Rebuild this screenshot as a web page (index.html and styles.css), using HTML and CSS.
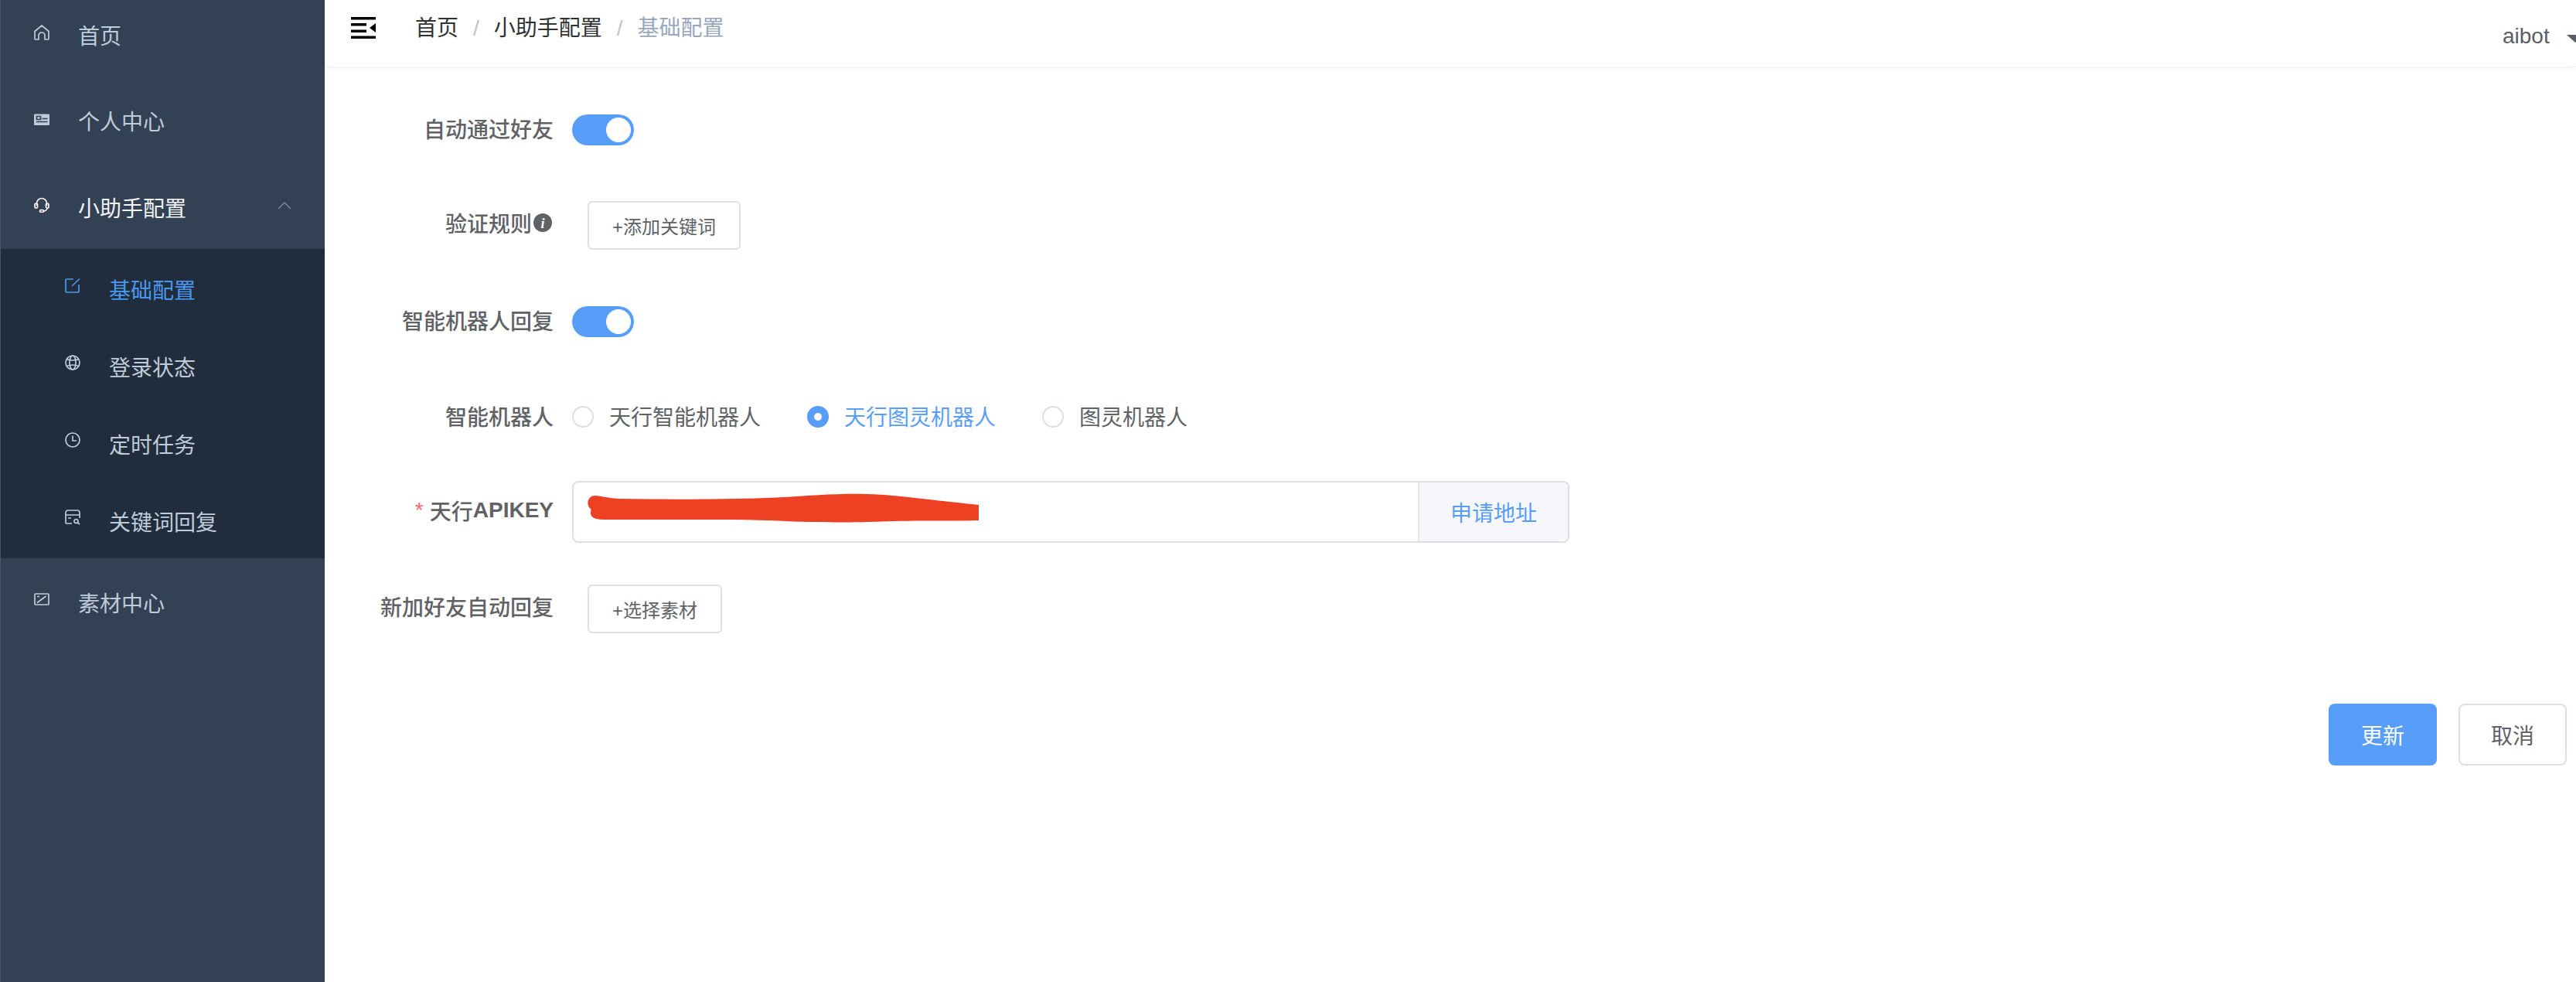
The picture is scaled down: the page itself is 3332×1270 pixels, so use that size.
FILE: index.html
```html
<!DOCTYPE html>
<html lang="zh-CN">
<head>
<meta charset="utf-8">
<title>基础配置</title>
<link rel="stylesheet" href="styles.css">
</head>
<body>
<div class="app">
  <aside class="sidebar">
    <nav class="menu">
      <a class="item">
        <svg class="icon" viewBox="0 0 20 20"><path d="M1 8.500 10 1l9 7.500V18a1 1 0 0 1-1 1h-4v-5a4 4 0 0 0-8 0v5H2a1 1 0 0 1-1-1z"/></svg>
        <span>首页</span>
      </a>
      <a class="item">
        <svg class="icon" viewBox="0 0 20 20"><path class="solid" d="M1 3.500h18a1 1 0 0 1 1 1V17a1 1 0 0 1-1 1H1a1 1 0 0 1-1-1V4.500a1 1 0 0 1 1-1z"/><path class="cut" d="M3.500 6.500h5v4h-5zM10.500 9.500h7M3 13.500h14.500"/></svg>
        <span>个人中心</span>
      </a>
      <a class="item item-open">
        <svg class="icon" viewBox="0 0 20 20"><path d="M3.500 11V8a6.500 6.500 0 0 1 13 0v3"/><rect x="1" y="8" width="3.500" height="6" rx="1.700"/><rect x="15.500" y="8" width="3.500" height="6" rx="1.700"/><path d="M17 14c0 3-3 4-5 4"/><rect x="7.500" y="16.500" width="5" height="2.800" rx="1.400"/></svg>
        <span>小助手配置</span>
        <svg class="chevron" viewBox="0 0 18 10"><path d="M1 9 9 1l8 8"/></svg>
      </a>
      <div class="submenu">
        <a class="subitem subitem-active">
          <svg class="icon" viewBox="0 0 20 20"><path d="M11 2H2a1 1 0 0 0-1 1v15a1 1 0 0 0 1 1h15a1 1 0 0 0 1-1V9"/><path d="M9 11 19 1.500"/></svg>
          <span>基础配置</span>
        </a>
        <a class="subitem">
          <svg class="icon" viewBox="0 0 20 20"><circle cx="10" cy="10" r="9"/><ellipse cx="10" cy="10" rx="4" ry="9"/><path d="M2.500 5.500c4 2 11 2 15 0M2.500 14.500c4-2 11-2 15 0"/></svg>
          <span>登录状态</span>
        </a>
        <a class="subitem">
          <svg class="icon" viewBox="0 0 20 20"><circle cx="10" cy="10" r="9"/><path d="M10 4.500V11h5"/></svg>
          <span>定时任务</span>
        </a>
        <a class="subitem">
          <svg class="icon" viewBox="0 0 20 20"><path d="M9 18H2a1 1 0 0 1-1-1V4a3 3 0 0 1 3-3h12a3 3 0 0 1 3 3v7M1 7h18M4 11h4"/><circle cx="14.500" cy="15" r="2.500"/><path d="m16.500 17 2.500 2"/></svg>
          <span>关键词回复</span>
        </a>
      </div>
      <a class="item item-last">
        <svg class="icon" viewBox="0 0 20 16"><rect x="1" y="1" width="18" height="14" rx="1"/><path d="M4 12.500 15.500 4M4 4.500h3"/></svg>
        <span>素材中心</span>
      </a>
    </nav>
  </aside>

  <main class="main">
    <header class="header">
      <svg class="hamburger" viewBox="0 0 32 28"><path d="M0 0h32v3.500H0zM0 24.500h32V28H0zM0 8h20v3.500H0zM0 16.500h20V20H0zM32 8v12l-8-6z"/></svg>
      <ol class="breadcrumb">
        <li>首页</li>
        <li class="sep">/</li>
        <li>小助手配置</li>
        <li class="sep">/</li>
        <li class="current">基础配置</li>
      </ol>
      <div class="user"><span>aibot</span><i class="caret"></i></div>
    </header>

    <form class="form">
      <div class="row">
        <label class="label">自动通过好友</label>
        <div class="switch"><i class="knob"></i></div>
      </div>
      <div class="row row-rule">
        <label class="label">验证规则<svg class="info" viewBox="0 0 24 24"><circle cx="12" cy="12" r="12"/><text x="12" y="18.500" text-anchor="middle">i</text></svg></label>
        <button type="button" class="btn-add btn-keyword">+添加关键词</button>
      </div>
      <div class="row row-after-rule">
        <label class="label">智能机器人回复</label>
        <div class="switch"><i class="knob"></i></div>
      </div>
      <div class="row">
        <label class="label">智能机器人</label>
        <div class="radios">
          <span class="radio"><i class="dot"></i>天行智能机器人</span>
          <span class="radio radio-on"><i class="dot"></i>天行图灵机器人</span>
          <span class="radio"><i class="dot"></i>图灵机器人</span>
        </div>
      </div>
      <div class="row row-key">
        <label class="label"><b class="star">*</b>天行<b class="latin">APIKEY</b></label>
        <div class="input-group">
          <div class="input">
            <svg class="scribble" viewBox="0 0 506 38" preserveAspectRatio="none"><path d="M5 4C12 1 20 6 40 7c60 1 130 1 190-1 40-1 80-6 130-5 40 1 50 4 146 14v20c-30 1-60 0-110 1-30 1-60 2-100 1-30 0-70-3-110-3H20C8 34 4 30 4 26c0-3 1-5 0-6C0 18-2 8 5 4z"/></svg>
          </div>
          <div class="append">申请地址</div>
        </div>
      </div>
      <div class="row">
        <label class="label">新加好友自动回复</label>
        <button type="button" class="btn-add btn-material">+选择素材</button>
      </div>
    </form>

    <div class="actions">
      <button type="button" class="btn btn-primary">更新</button>
      <button type="button" class="btn">取消</button>
    </div>
  </main>
</div>
</body>
</html>
```

FILE: styles.css
```css
* { box-sizing: border-box; }
html, body { margin: 0; height: 100%; overflow: hidden; background: #fff; }
body { font-family: "Liberation Sans", "Noto Sans CJK SC", sans-serif; font-size: 28px; color: #606266; }
.app { display: flex; height: 1270px; }

/* sidebar */
.sidebar { flex: 0 0 420px; background: #334155; border-left: 1px solid #46556a; overflow: hidden; color: #bfcbd9; }
.menu { margin-top: -11px; }
.item, .subitem { display: flex; align-items: center; }
.item { height: 112px; padding-left: 43px; }
.item:nth-child(3) { height: 109px; }
.item span { margin-left: 37px; }
.item:nth-child(2) span { margin-bottom: 2px; }
.subitem { height: 100px; padding-left: 83px; }
.subitem span { margin-left: 37px; margin-top: 3px; }
.item-last span { margin-top: 2px; }
.item-open { color: #f4f4f5; position: relative; }
.submenu { background: #212d3c; }
.subitem-active { color: #4a98ee; }
.icon { width: 20px; height: 20px; margin-top: -6px; fill: none; stroke: currentColor; stroke-width: 1.7; flex: none; }
.icon .solid { fill: currentColor; stroke: none; }
.icon .cut { stroke: #334155; }
.chevron { position: absolute; left: 358px; top: 48px; width: 18px; height: 10px; fill: none; stroke: #7d8795; stroke-width: 1.5; }

/* main */
.main { flex: 1; min-width: 0; display: flex; flex-direction: column; }
.header { height: 87px; flex: none; display: flex; align-items: flex-start; padding: 22px 0 0 34px; border-bottom: 1px solid #f0f1f2; box-shadow: 0 2px 8px rgba(0, 21, 41, .04); }
.hamburger { width: 32px; height: 28px; flex: none; fill: #000; }
.breadcrumb { list-style: none; margin: 0 0 0 51px; padding: 0; display: flex; line-height: 28px; color: #303133; }
.breadcrumb li { margin-top: 1px; }
.sep { margin: 0 19px; color: #c0c4cc; font-family: "Liberation Sans", sans-serif; }
.current { color: #97a8be; }
.user { margin-left: auto; display: flex; align-items: center; height: 50px; margin-top: 0; color: #5a5e66; width: 95px; flex: none; overflow: hidden; white-space: nowrap; }
.caret { flex: none; width: 0; height: 0; margin-left: 22px; border: 11px solid transparent; border-top: 10px solid #5a5e66; border-bottom: 0; margin-top: 6px; }

/* form */
.form { padding-top: 41px; display: flex; flex-direction: column; gap: 44px; }
.row { display: flex; align-items: center; height: 80px; }
.row-rule { margin-top: -2px; }
.row-after-rule { margin-top: 2px; }
.row-key { margin-top: -2px; }
.label { width: 296px; flex: none; margin-right: 24px; padding-bottom: 5px; text-align: right; font-weight: 500; display: flex; justify-content: flex-end; align-items: center; white-space: nowrap; }
.star { color: #f56c6c; font-weight: 400; margin-right: 8px; }
.latin { font-weight: 700; }
.info { width: 24px; height: 24px; margin: 0 2px; fill: #606266; }
.info text { fill: #fff; font: italic 700 18px "Liberation Serif", serif; }
.switch { width: 80px; height: 40px; border-radius: 20px; background: #589ef9; display: flex; justify-content: flex-end; align-items: center; padding-right: 4px; }
.knob { width: 32px; height: 32px; border-radius: 50%; background: #fff; }
.btn-add { margin: 3px 0 0 20px; height: 63px; background: #fff; border: 2px solid #dcdfe6; border-radius: 6px; color: #606266; font: inherit; font-size: 24px; padding: 0; }
.btn-keyword { width: 198px; }
.btn-material { width: 174px; }
.radios { display: flex; padding-bottom: 4px; }
.radio { display: flex; align-items: center; margin-right: 60px; }
.radio .dot { width: 28px; height: 28px; border-radius: 50%; border: 2px solid #dcdfe6; margin-right: 20px; background: #fff; margin-top: 2px; }
.radio-on { color: #589ef9; }
.radio-on .dot { border: 9px solid #589ef9; }
.input-group { display: flex; width: 1290px; height: 80px; border: 2px solid #dcdfe6; border-radius: 8px; overflow: hidden; }
.input { flex: 1; padding: 14px 0 0 18px; }
.scribble { display: block; width: 506px; height: 38px; fill: #ee4124; }
.append { width: 194px; flex: none; display: flex; align-items: center; justify-content: center; background: #f5f7fa; border-left: 2px solid #e4e7ed; color: #589ef9; }

/* actions */
.actions { display: flex; justify-content: flex-end; gap: 28px; padding: 84px 12px 0 0; }
.btn { width: 140px; height: 80px; border-radius: 8px; border: 2px solid #dcdfe6; background: #fff; color: #606266; font: inherit; padding: 0; }
.btn-primary { background: #589ef9; border-color: #589ef9; color: #fff; }
```
